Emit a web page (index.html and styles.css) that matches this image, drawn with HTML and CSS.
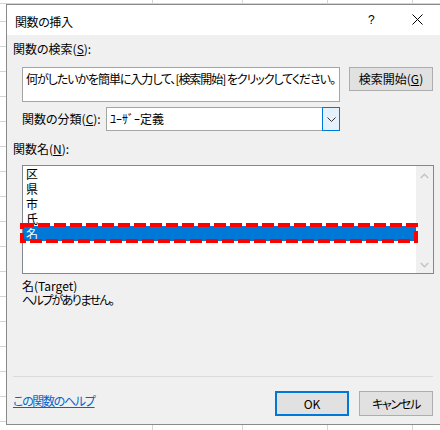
FILE: index.html
```html
<!DOCTYPE html>
<html lang="ja">
<head>
<meta charset="utf-8">
<title>関数の挿入</title>
<link rel="stylesheet" href="styles.css">
</head>
<body>
<div class="dialog">
  <div class="titlebar">
    <span class="title">関数の挿入</span>
    <span class="help">?</span>
    <svg class="close" width="11" height="11" viewBox="0 0 11 11"><path d="M0.5 0.5 L10.5 10.5 M10.5 0.5 L0.5 10.5" stroke="#000" stroke-width="1" fill="none"/></svg>
  </div>
  <div class="content">
    <div class="label first">関数の検索(<u>S</u>):</div>
    <div class="search-row">
      <div class="textbox">何がしたいかを簡単に入力して、[検索開始] をクリックしてください。</div>
      <button class="btn search-btn">検索開始(<u>G</u>)</button>
    </div>
    <div class="cat-row">
      <span class="cat-label">関数の分類(<u>C</u>):</span>
      <div class="select">
        <span class="select-text">ﾕｰｻﾞｰ定義</span>
        <span class="dd"><svg width="9" height="5" viewBox="0 0 9 5"><path d="M0.5 0.5 L4.5 4.5 L8.5 0.5" stroke="#333" stroke-width="1" fill="none"/></svg></span>
      </div>
    </div>
    <div class="label second">関数名(<u>N</u>):</div>
    <div class="listbox">
      <ul class="items">
        <li>区</li>
        <li>県</li>
        <li>市</li>
        <li>氏</li>
        <li class="sel">名</li>
      </ul>
      <div class="vscroll">
        <svg width="9" height="6" viewBox="0 0 9 6"><path d="M0.8 5 L4.5 1.3 L8.2 5" stroke="#c4c4c4" stroke-width="1.6" fill="none"/></svg>
        <svg width="9" height="6" viewBox="0 0 9 6"><path d="M0.8 1 L4.5 4.7 L8.2 1" stroke="#c4c4c4" stroke-width="1.6" fill="none"/></svg>
      </div>
      <svg class="mark" width="398" height="20" viewBox="0 0 398 20"><rect x="2" y="2" width="394" height="16" fill="none" stroke="#ff0000" stroke-width="4" stroke-dasharray="12 4"/></svg>
    </div>
    <div class="desc name">名(Target)</div>
    <div class="desc nohelp">ヘルプがありません。</div>
  </div>
  <div class="footer">
    <div class="sep"></div>
    <div class="footer-row">
      <a class="help-link" href="#">この関数のヘルプ</a>
      <button class="btn ok">OK</button>
      <button class="btn cancel">キャンセル</button>
    </div>
  </div>
</div>
</body>
</html>
```
FILE: styles.css
```css
* { box-sizing: border-box; }
html, body { margin: 0; padding: 0; }
body {
  width: 440px;
  height: 430px;
  overflow: hidden;
  font-family: "Noto Sans CJK JP", "Noto Sans", sans-serif;
  font-size: 12px;
  color: #000;
  font-feature-settings: "palt";
  background-color: #fff;
  background-image:
    linear-gradient(to bottom, transparent 0 3px, #d4d4d4 3px 4px, transparent 4px),
    linear-gradient(to right, transparent 0 152px, #d4d4d4 152px 153px, transparent 153px 242px, #d4d4d4 242px 243px, transparent 243px 327px, #d4d4d4 327px 328px, transparent 328px 412px, #d4d4d4 412px 413px, transparent 413px),
    repeating-linear-gradient(to bottom, transparent 0 21px, #d4d4d4 21px 22px, transparent 22px 25px);
}
.dialog {
  margin: 4px 0 0 6px;
  width: 470px;
  height: 421px;
  border: 1px solid #8a8a8a;
  background: #f0f0f0;
  display: flex;
  flex-direction: column;
}
.titlebar {
  height: 30px;
  background: #fff;
  display: flex;
  align-items: center;
  padding-top: 4px;
}
.title { width: 361px; padding-left: 8px; line-height: 16px; letter-spacing: -0.4px; }
.help { width: 6px; font-family: "Liberation Sans", sans-serif; font-size: 12px; line-height: 16px; position: relative; top: -2px; }
.close { margin-left: 38px; position: relative; top: -3px; }
.content { padding-left: 6px; }
.label { line-height: 16px; }
.label.first { margin-top: 6px; }
.label.second { margin-top: 10px; }
.search-row {
  margin-top: 10px;
  padding-left: 9px;
  display: flex;
  align-items: flex-start;
}
.textbox {
  width: 318px;
  height: 35px;
  border: 1px solid #a5a5a5;
  background: #fff;
  padding: 3px 0 0 3px;
  line-height: 16px;
  letter-spacing: -1.05px;
  white-space: nowrap;
  overflow: hidden;
}
.btn {
  font: inherit;
  font-feature-settings: "palt";
  color: #000;
  background: #e1e1e1;
  border: 1px solid #adadad;
  padding: 0;
  height: 25px;
  line-height: 16px;
}
.search-btn { width: 84px; margin-left: 9px; height: 24px; }
.cat-row {
  margin-top: 5px;
  padding-left: 9px;
  display: flex;
  align-items: center;
}
.cat-label { width: 84px; line-height: 16px; }
.select {
  width: 234px;
  height: 24px;
  border: 1px solid #a5a5a5;
  background: #fff;
  display: flex;
  align-items: center;
}
.select-text { padding-left: 3px; line-height: 16px; flex: 1; }
.dd {
  align-self: stretch;
  width: 18px;
  margin: -1px -1px -1px 0;
  border: 1px solid #0078d7;
  background: #e5f1fb;
  display: flex;
  align-items: center;
  justify-content: center;
}
.listbox {
  position: relative;
  margin-top: 8px;
  margin-left: 9px;
  width: 412px;
  height: 109px;
  border: 1px solid #828790;
  background: #fff;
  display: flex;
}
.items {
  list-style: none;
  margin: 0;
  padding: 0;
  flex: 1;
}
.items li {
  height: 15px;
  line-height: 15px;
  padding-left: 3px;
}
.items li.sel {
  background: #0078d7;
  color: #fff;
}
.vscroll {
  width: 17px;
  background: #f0f0f0;
  display: flex;
  flex-direction: column;
  justify-content: space-between;
  align-items: center;
  padding: 7px 0 5px;
}
.mark {
  position: absolute;
  left: -3px;
  top: 57px;
}
.desc { margin-left: 9px; line-height: 14px; }
.desc.name { margin-top: 5px; }
.desc.nohelp { letter-spacing: -1.6px; }
.footer { margin-top: auto; }
.sep {
  margin-left: 6px;
  width: 420px;
  height: 1px;
  background: #dadada;
}
.footer-row {
  margin-top: 14px;
  width: 426px;
  padding-left: 6px;
  padding-bottom: 8px;
  display: flex;
  align-items: flex-start;
}
.help-link {
  margin-top: 2px;
  margin-right: auto;
  color: #0066cc;
  text-decoration: underline;
  line-height: 16px;
  letter-spacing: -1.3px;
}
.ok {
  width: 74px;
  border: 2px solid #0078d7;
}
.cancel {
  width: 74px;
  margin-left: 10px;
  letter-spacing: -1.3px;
}
```
